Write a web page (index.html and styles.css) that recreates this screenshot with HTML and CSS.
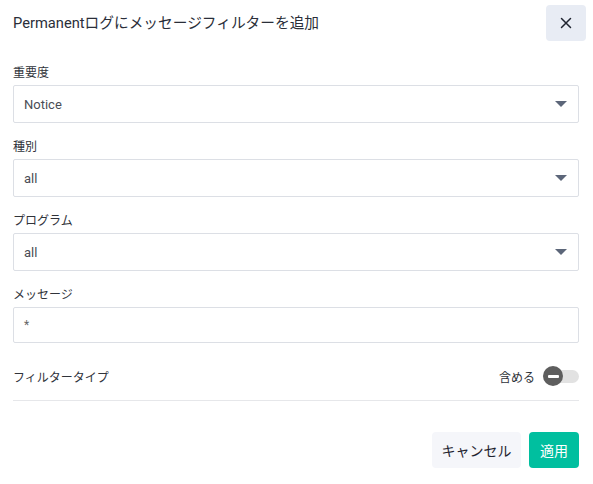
FILE: index.html
```html
<!DOCTYPE html>
<html lang="ja">
<head>
<meta charset="utf-8">
<title>メッセージフィルター</title>
<link rel="stylesheet" href="styles.css">
</head>
<body>
<div class="dialog">
  <div class="header">
    <h1 class="title">Permanentログにメッセージフィルターを追加</h1>
    <button class="close" aria-label="閉じる">
      <svg width="12" height="12" viewBox="0 0 12 12"><path d="M1.5 1.5L10.5 10.5M10.5 1.5L1.5 10.5" stroke="#1f2430" stroke-width="1.5" fill="none" stroke-linecap="round"/></svg>
    </button>
  </div>
  <div class="form">
    <div class="field">
      <label class="label">重要度</label>
      <div class="select"><span>Notice</span><span class="caret"></span></div>
    </div>
    <div class="field">
      <label class="label">種別</label>
      <div class="select"><span>all</span><span class="caret"></span></div>
    </div>
    <div class="field">
      <label class="label">プログラム</label>
      <div class="select"><span>all</span><span class="caret"></span></div>
    </div>
    <div class="field">
      <label class="label">メッセージ</label>
      <div class="input"><span>*</span></div>
    </div>
    <div class="row">
      <span class="row-label">フィルタータイプ</span>
      <div class="toggle-wrap">
        <span class="row-label">含める</span>
        <span class="toggle"><span class="knob"><span class="minus"></span></span></span>
      </div>
    </div>
    <div class="footer">
      <button class="btn cancel">キャンセル</button>
      <button class="btn apply">適用</button>
    </div>
  </div>
</div>
</body>
</html>
```
FILE: styles.css
```css
* { box-sizing: border-box; }
html, body { margin: 0; padding: 0; background: #fff; }
body {
  font-family: Roboto, "Noto Sans CJK JP", sans-serif;
  color: #2b2f38;
}
.header {
  display: flex;
  justify-content: space-between;
  align-items: center;
  padding: 5px 7px 0 13px;
  height: 41px;
}
.title {
  margin: 0;
  font-size: 14.7px;
  font-weight: 400;
  color: #2a2e39;
  line-height: 20px;
}
.close {
  width: 40px;
  height: 36px;
  border: none;
  border-radius: 4px;
  background: #e8ecf4;
  display: flex;
  align-items: center;
  justify-content: center;
  padding: 0;
}
.form {
  padding: 24px 14px 0 13px;
}
.field {
  display: flex;
  flex-direction: column;
  margin-bottom: 16px;
}
.label {
  font-size: 12px;
  line-height: 16px;
  color: #30333a;
  margin-bottom: 4px;
}
.select, .input {
  height: 38px;
  border: 1px solid #dcdfe5;
  border-radius: 2px;
  display: flex;
  align-items: center;
  justify-content: space-between;
  padding: 0 11px 0 10px;
  font-size: 13px;
  color: #4a4d55;
}
.input { height: 36px; }
.input span { font-size: 12px; color: #666; }
.caret {
  width: 0;
  height: 0;
  border-left: 6px solid transparent;
  border-right: 6px solid transparent;
  border-top: 6px solid #5c6679;
}
.row {
  margin-top: 19px;
  height: 28px;
  display: flex;
  align-items: center;
  justify-content: space-between;
}
.row-label {
  font-size: 12px;
  color: #30333a;
}
.toggle-wrap {
  display: flex;
  align-items: center;
  gap: 8px;
}
.toggle {
  width: 36px;
  height: 13px;
  border-radius: 7px;
  background: #e2e2e2;
  display: flex;
  align-items: center;
}
.knob {
  width: 20px;
  height: 20px;
  border-radius: 50%;
  background: #5e5e5e;
  display: flex;
  align-items: center;
  justify-content: center;
}
.minus {
  width: 11px;
  height: 3px;
  background: #fff;
  border-radius: 1px;
}
.footer {
  margin-top: 10px;
  border-top: 1px solid #e6e7ea;
  padding-top: 31px;
  display: flex;
  justify-content: flex-end;
  gap: 8px;
}
.btn {
  height: 36px;
  border: none;
  border-radius: 4px;
  font-family: Roboto, "Noto Sans CJK JP", sans-serif;
  font-size: 14px;
  padding: 0;
}
.cancel {
  width: 89px;
  background: #f5f6fa;
  color: #1f2430;
}
.apply {
  width: 50px;
  background: #00bf9f;
  color: #fff;
}
```
